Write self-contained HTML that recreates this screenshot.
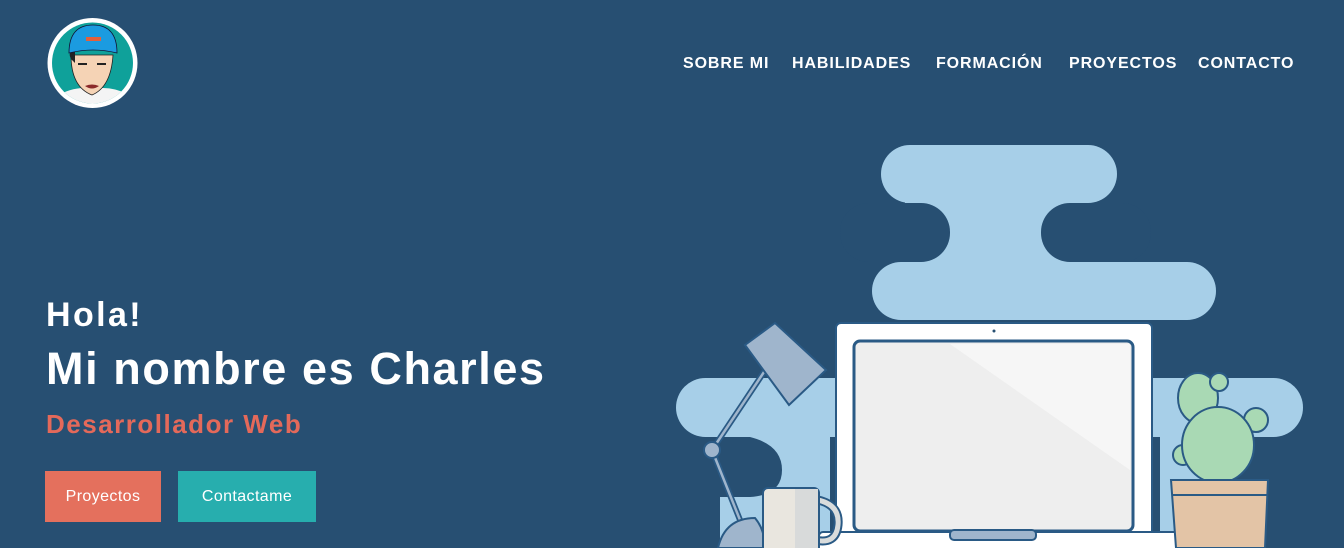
<!DOCTYPE html>
<html><head><meta charset="utf-8"><style>
*{margin:0;padding:0;box-sizing:border-box}
body{width:1344px;height:548px;background:#274f72;font-family:"Liberation Sans",sans-serif;overflow:hidden;position:relative;color:#fff}
.nav{position:absolute;top:55px;font-weight:bold;font-size:16px;letter-spacing:0.9px}
.t{position:absolute;left:46px;font-weight:bold;white-space:nowrap}
.btn{position:absolute;top:471px;height:51px;color:#fff;font-size:16px;display:flex;align-items:center;justify-content:center;letter-spacing:0.4px}
</style></head><body>
<svg style="position:absolute;left:45px;top:17px" width="95" height="92" viewBox="0 0 95 92">
<circle cx="47.5" cy="46" r="45" fill="#fff"/>
<circle cx="47.5" cy="46" r="40.5" fill="#0fa19a"/>
<clipPath id="c"><circle cx="47.5" cy="46" r="40.5"/></clipPath>
<g clip-path="url(#c)">
<path d="M10 80 Q30 68 48 72 Q68 68 88 80 L88 95 L10 95Z" fill="#f4f4f4"/>
<path d="M26 38 Q26 70 47 78 Q66 70 68 38Z" fill="#f5d3b5" stroke="#222" stroke-width="0.8"/>
<path d="M26 42 Q22 34 30 34 L30 46Z" fill="#222"/>
<path d="M24 36 Q24 8 48 8 Q72 8 72 36 Q48 30 24 36Z" fill="#1b9be0" stroke="#113" stroke-width="0.8"/>
<rect x="41" y="20" width="15" height="4" fill="#e4603b"/>
<path d="M33 47 h9 M52 47 h9" stroke="#222" stroke-width="2"/>
<path d="M40 69 Q47 74 54 69 Q47 66 40 69Z" fill="#8b2a2a"/>
</g></svg>
<div class="nav" style="left:683px">SOBRE MI</div>
<div class="nav" style="left:792px">HABILIDADES</div>
<div class="nav" style="left:936px">FORMACIÓN</div>
<div class="nav" style="left:1069px">PROYECTOS</div>
<div class="nav" style="left:1198px">CONTACTO</div>
<div class="t" style="top:296px;font-size:34px;letter-spacing:2.4px">Hola!</div>
<div class="t" style="top:343px;font-size:45px;letter-spacing:1.6px">Mi nombre es Charles</div>
<div class="t" style="top:409px;font-size:26px;color:#e4695a;letter-spacing:1.5px">Desarrollador Web</div>
<div class="btn" style="left:45px;width:116px;background:#e4705d">Proyectos</div>
<div class="btn" style="left:178px;width:138px;background:#27aeae">Contactame</div>
<svg style="position:absolute;left:0;top:0" width="1344" height="548">
<g fill="#a7cfe8">
<rect x="881" y="145" width="236" height="58" rx="29"/>
<rect x="905" y="190" width="180" height="80"/>
<rect x="872" y="262" width="344" height="58" rx="29"/>
<rect x="676" y="378" width="627" height="59" rx="29.5"/>
<rect x="720" y="430" width="110" height="118"/>
<rect x="1160" y="430" width="40" height="118"/>
</g>
<rect x="840" y="203" width="110" height="59" rx="29" fill="#274f72"/>
<rect x="1041" y="203" width="110" height="59" rx="29" fill="#274f72"/>
<path d="M720 437 L750 437 Q782 445 782 470 Q782 495 750 497 L720 497Z" fill="#274f72"/>
<rect x="836" y="323" width="316" height="225" rx="5" fill="#fff" stroke="#2a5a85" stroke-width="2"/>
<circle cx="994" cy="331" r="1.5" fill="#274f72"/>
<rect x="854" y="341" width="279" height="190" rx="6" fill="#eeeeee" stroke="#2a5a85" stroke-width="3"/>
<path d="M950 344 L1130 344 L1130 470Z" fill="#f6f6f6"/>
<rect x="819" y="532" width="395" height="20" rx="4" fill="#fff" stroke="#2a5a85" stroke-width="2"/>
<rect x="950" y="530" width="86" height="10" rx="4" fill="#9fb5cc" stroke="#2a5a85" stroke-width="2"/>
<path d="M712 450 L772 360 M712 450 L742 525" stroke="#2a5a85" stroke-width="6"/>
<path d="M712 450 L772 360 M712 450 L742 525" stroke="#9fb5cc" stroke-width="2.5"/>
<circle cx="712" cy="450" r="8" fill="#9fb5cc" stroke="#2a5a85" stroke-width="2"/>
<path d="M745 345 L775 323 L826 370 L789 405Z" fill="#9fb5cc" stroke="#2a5a85" stroke-width="2"/>
<path d="M718 548 Q725 518 755 518 Q765 530 765 548Z" fill="#9fb5cc" stroke="#2a5a85" stroke-width="2"/>
<path d="M818 500 Q840 505 838 525 Q836 545 815 540" fill="none" stroke="#2a5a85" stroke-width="9"/>
<path d="M818 500 Q840 505 838 525 Q836 545 815 540" fill="none" stroke="#d9dcdc" stroke-width="5"/>
<rect x="763" y="488" width="56" height="70" rx="5" fill="#e9e6df" stroke="#2a5a85" stroke-width="2"/>
<rect x="795" y="489" width="23" height="65" fill="#d8dada"/>
<ellipse cx="1198" cy="398" rx="20" ry="25" fill="#a9d9b4" stroke="#2a5a85" stroke-width="2"/>
<circle cx="1219" cy="382" r="9" fill="#a9d9b4" stroke="#2a5a85" stroke-width="2"/>
<circle cx="1256" cy="420" r="12" fill="#a9d9b4" stroke="#2a5a85" stroke-width="2"/>
<circle cx="1183" cy="455" r="10" fill="#a9d9b4" stroke="#2a5a85" stroke-width="2"/>
<ellipse cx="1218" cy="445" rx="36" ry="38" fill="#a9d9b4" stroke="#2a5a85" stroke-width="2"/>
<path d="M1171 480 L1268 480 L1265 548 L1176 548Z" fill="#e3c4a6" stroke="#2a5a85" stroke-width="2"/>
<path d="M1172 495 L1268 495" stroke="#2a5a85" stroke-width="2"/>
</svg>
</body></html>
